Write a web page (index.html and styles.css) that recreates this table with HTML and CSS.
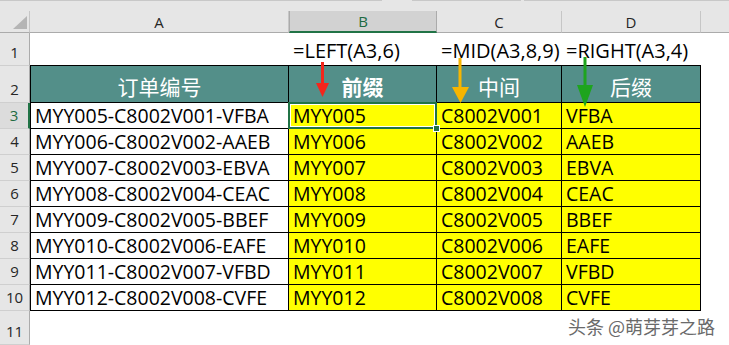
FILE: index.html
```html
<!DOCTYPE html>
<html lang="zh-CN">
<head>
    <meta charset="UTF-8">
    <meta name="viewport" content="width=device-width, initial-scale=1.0">
    <title>订单编号拆分</title>
    <link rel="stylesheet" href="styles.css">
</head>
<body>
    <div class="sheet">
        <div class="top-edge">
            <span class="seg seg-a"></span>
            <span class="seg seg-gap"></span>
            <span class="seg seg-b"></span>
            <span class="seg seg-gap2"></span>
            <span class="seg seg-c"></span>
        </div>
        <div class="grid">
            <!-- column headers -->
            <div class="corner"></div>
            <div class="colhead">A</div>
            <div class="colhead active">B</div>
            <div class="colhead">C</div>
            <div class="colhead">D</div>
            <div class="colhead last"></div>

            <!-- row 1: formulas -->
            <div class="rowhead">1</div>
            <div class="cell note first"></div>
            <div class="cell note">=LEFT(A3,6)</div>
            <div class="cell note">=MID(A3,8,9)</div>
            <div class="cell note">=RIGHT(A3,4)</div>
            <div class="cell empty"></div>

            <!-- row 2: titles -->
            <div class="rowhead">2</div>
            <div class="cell title first">订单编号</div>
            <div class="cell title strong">前缀</div>
            <div class="cell title">中间</div>
            <div class="cell title">后缀</div>
            <div class="cell empty"></div>

            <div class="rowhead active">3</div>
            <div class="cell code first">MYY005-C8002V001-VFBA</div>
            <div class="cell part selected">MYY005<span class="handle"></span></div>
            <div class="cell part">C8002V001</div>
            <div class="cell part">VFBA</div>
            <div class="cell empty"></div>

            <div class="rowhead">4</div>
            <div class="cell code first">MYY006-C8002V002-AAEB</div>
            <div class="cell part">MYY006</div>
            <div class="cell part">C8002V002</div>
            <div class="cell part">AAEB</div>
            <div class="cell empty"></div>

            <div class="rowhead">5</div>
            <div class="cell code first">MYY007-C8002V003-EBVA</div>
            <div class="cell part">MYY007</div>
            <div class="cell part">C8002V003</div>
            <div class="cell part">EBVA</div>
            <div class="cell empty"></div>

            <div class="rowhead">6</div>
            <div class="cell code first">MYY008-C8002V004-CEAC</div>
            <div class="cell part">MYY008</div>
            <div class="cell part">C8002V004</div>
            <div class="cell part">CEAC</div>
            <div class="cell empty"></div>

            <div class="rowhead">7</div>
            <div class="cell code first">MYY009-C8002V005-BBEF</div>
            <div class="cell part">MYY009</div>
            <div class="cell part">C8002V005</div>
            <div class="cell part">BBEF</div>
            <div class="cell empty"></div>

            <div class="rowhead">8</div>
            <div class="cell code first">MYY010-C8002V006-EAFE</div>
            <div class="cell part">MYY010</div>
            <div class="cell part">C8002V006</div>
            <div class="cell part">EAFE</div>
            <div class="cell empty"></div>

            <div class="rowhead">9</div>
            <div class="cell code first">MYY011-C8002V007-VFBD</div>
            <div class="cell part">MYY011</div>
            <div class="cell part">C8002V007</div>
            <div class="cell part">VFBD</div>
            <div class="cell empty"></div>

            <div class="rowhead">10</div>
            <div class="cell code first">MYY012-C8002V008-CVFE</div>
            <div class="cell part">MYY012</div>
            <div class="cell part">C8002V008</div>
            <div class="cell part">CVFE</div>
            <div class="cell empty"></div>

            <div class="rowhead">11</div>
            <div class="cell empty"></div>
            <div class="cell empty"></div>
            <div class="cell empty"></div>
            <div class="cell empty"></div>
            <div class="cell empty"></div>
        </div>

        <!-- arrows from each formula down to its column -->
        <svg class="arrows" width="729" height="345" viewBox="0 0 729 345">
            <rect x="321" y="62" width="3" height="23" fill="#f4261c"/>
            <polygon points="316,83 329,83 322.5,97" fill="#f4261c"/>
            <rect x="458.5" y="58" width="3" height="31" fill="#f7b500"/>
            <polygon points="452,87 469,87 460.5,103" fill="#f7b500"/>
            <rect x="583.5" y="57" width="3" height="30" fill="#1ea41e"/>
            <polygon points="577,85 593,85 585,107" fill="#1ea41e"/>
        </svg>

        <div class="mark">头条 @萌芽芽之路</div>
    </div>
</body>
</html>
```

FILE: styles.css
```css
body {
    margin: 0;
    background: #fff;
    overflow: hidden;
}
.sheet {
    position: relative;
    width: 729px;
    height: 345px;
    background: #fff;
    overflow: hidden;
    font-family: 'Open Sans', 'Noto Sans CJK SC', sans-serif;
}
.top-edge {
    display: flex;
    height: 11px;
    background: #e6e6e6;
}
.seg {
    height: 0;
    border-top: 1px solid #c8c8c8;
}
.seg-a { width: 382px; }
.seg-gap { width: 30px; border-top-color: #e6e6e6; }
.seg-b { width: 109px; }
.seg-gap2 { width: 3px; border-top-color: #e6e6e6; }
.seg-c { flex: 1; }

.grid {
    display: grid;
    grid-template-columns: 30px 259px 148px 125px 139px 1fr;
    grid-template-rows: 22px 33px 37px repeat(8, 26px) 34px;
}
.grid > div {
    box-sizing: border-box;
}

/* headers */
.corner {
    position: relative;
    background: #e6e6e6;
    border-right: 1px solid #c6c6c6;
    border-bottom: 1px solid #ababab;
}
.corner::after {
    content: '';
    position: absolute;
    left: 13px;
    top: 5px;
    width: 14px;
    height: 13px;
    background: #b5b5b5;
    clip-path: polygon(100% 0, 100% 100%, 0 100%);
}
.colhead {
    display: flex;
    align-items: center;
    justify-content: center;
    background: #e6e6e6;
    border-right: 1px solid #c6c6c6;
    border-bottom: 1px solid #ababab;
    font-size: 15px;
    color: #262626;
}
.colhead.active {
    background: #d2d2d2;
    color: #1e6b42;
    border-left: 1px solid #ababab;
    border-right: 1px solid #ababab;
    border-bottom: 2px solid #217346;
}
.colhead.last {
    border-right: none;
}
.rowhead {
    display: flex;
    align-items: flex-end;
    justify-content: center;
    padding-bottom: 3px;
    background: #e6e6e6;
    border-right: 1px solid #ababab;
    border-bottom: 1px solid #cfcfcf;
    font-size: 15px;
    color: #262626;
}
.rowhead.active {
    background: #dcdcdc;
    color: #1e6b42;
    border-right: 2px solid #217346;
}

/* cells */
.cell {
    display: flex;
    align-items: center;
    padding-left: 4px;
    white-space: nowrap;
    font-size: 19.5px;
    color: #000;
}
.cell.first {
    border-left: 1px solid #000;
}
.note {
    align-items: flex-end;
    padding-bottom: 1px;
    font-size: 20px;
    border-bottom: 1px solid #000;
}
.note.first {
    border-left: none;
}
.title {
    justify-content: center;
    padding: 4px 0 0 0;
    background: #538f89;
    color: #fff;
    font-family: 'Noto Sans CJK SC', sans-serif;
    font-size: 21px;
    border-right: 1px solid #000;
    border-bottom: 1px solid #000;
}
.title.strong {
    font-weight: 700;
}
.code,
.part {
    border-right: 1px solid #000;
    border-bottom: 1px solid #000;
}
.part {
    background: #ffff00;
}
.selected {
    position: relative;
}
.selected::after {
    content: '';
    position: absolute;
    left: -1px;
    top: -1px;
    right: -1px;
    bottom: -1px;
    border: 2px solid #217346;
    box-shadow: inset 0 0 0 1px #fff;
}
.handle {
    position: absolute;
    right: -4px;
    bottom: -4px;
    width: 7px;
    height: 7px;
    box-sizing: border-box;
    background: #217346;
    border: 1px solid #fff;
    z-index: 2;
}

/* overlays */
.arrows {
    position: absolute;
    left: 0;
    top: 0;
    pointer-events: none;
}
.mark {
    position: absolute;
    left: 568px;
    top: 313px;
    font-family: 'Noto Sans CJK SC', sans-serif;
    font-size: 18px;
    color: #6a6a6a;
    text-shadow: 0 0 2px #fff, 0 0 1px #fff;
    white-space: nowrap;
}
```
